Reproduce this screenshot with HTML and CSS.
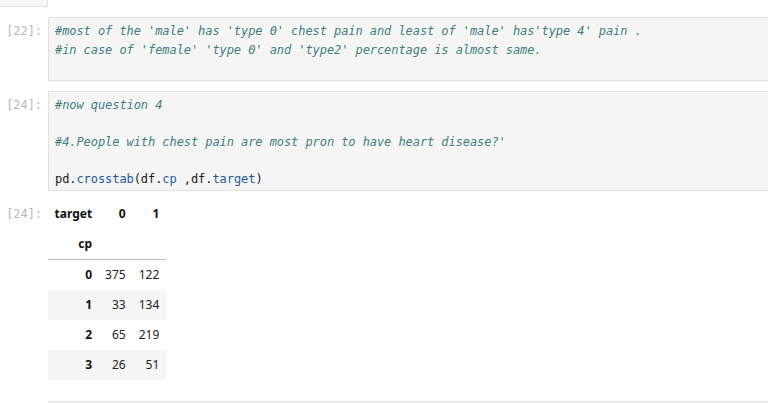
FILE: index.html
```html
<!DOCTYPE html>
<html>
<head>
<meta charset="utf-8">
<link rel="stylesheet" href="styles.css">
</head>
<body>
<div class="prev"></div>

<div class="cell">
  <div class="prompt">[22]:</div>
  <div class="input"><pre class="code"><span class="cm">#most of the 'male' has 'type 0' chest pain and least of 'male' has'type 4' pain .</span>
<span class="cm">#in case of 'female' 'type 0' and 'type2' percentage is almost same.</span>
<span class="blank"> </span></pre></div>
</div>

<div class="cell">
  <div class="prompt">[24]:</div>
  <div class="input"><pre class="code"><span class="cm">#now question 4</span>

<span class="cm">#4.People with chest pain are most pron to have heart disease?'</span>

pd.<span class="pr">crosstab</span>(df.<span class="pr">cp</span> ,df.<span class="pr">target</span>)</pre></div>
</div>

<div class="output">
  <div class="prompt out">[24]:</div>
  <table class="frame">
    <thead>
      <tr><th>target</th><th>0</th><th>1</th></tr>
      <tr><th>cp</th><th></th><th></th></tr>
    </thead>
    <tbody>
      <tr><th>0</th><td>375</td><td>122</td></tr>
      <tr><th>1</th><td>33</td><td>134</td></tr>
      <tr><th>2</th><td>65</td><td>219</td></tr>
      <tr><th>3</th><td>26</td><td>51</td></tr>
    </tbody>
  </table>
</div>

<div class="next"></div>
</body>
</html>
```

FILE: styles.css
```css
html, body {
  margin: 0;
  padding: 0;
  background: #ffffff;
  overflow: hidden;
}

.prev {
  width: 47px;
  height: 6px;
  background: #f7f7f7;
  border-right: 1px solid #e0e0e0;
  border-bottom: 1px solid #e0e0e0;
}

.cell {
  display: flex;
  margin-top: 10px;
}

.prompt {
  flex: none;
  width: 48px;
  box-sizing: border-box;
  padding-right: 6px;
  padding-top: 5px;
  text-align: right;
  font-family: "DejaVu Sans Mono", monospace;
  font-size: 12px;
  letter-spacing: -0.07px;
  line-height: 18.5px;
  color: #b8b8b8;
}

.input {
  flex: 1;
  background: #f5f5f5;
  border: 1px solid #e0e0e0;
  border-right: 0;
}

.code {
  margin: 0;
  padding: 4px 6px 2px 6px;
  font-family: "DejaVu Sans Mono", monospace;
  font-size: 12px;
  letter-spacing: -0.07px;
  line-height: 18.5px;
  color: #1a1a1a;
  white-space: pre;
}

.cm {
  color: #408080;
  font-style: italic;
}

.pr {
  color: #1f5a9a;
}

.output {
  display: flex;
  margin-top: 3px;
}

.prompt.out {
  padding-top: 5px;
  line-height: 30px;
}

.frame {
  margin-top: 5px;
  border-collapse: collapse;
  border-spacing: 0;
  font-family: "Noto Sans", "Open Sans", sans-serif;
  font-size: 12px;
  color: #212121;
}

.frame th,
.frame td {
  padding: 6px 6.5px;
  line-height: 18px;
  text-align: right;
  vertical-align: middle;
}

.frame th {
  font-weight: bold;
  color: #111111;
}

.frame td {
  font-weight: normal;
}

.frame thead {
  border-bottom: 1px solid #bdbdbd;
}

.frame tbody tr:nth-child(even) {
  background: #f5f5f5;
}

.next {
  margin-top: 21px;
  margin-left: 48px;
  height: 1px;
  background: #f5f5f5;
  border-top: 1px solid #e0e0e0;
}
```
